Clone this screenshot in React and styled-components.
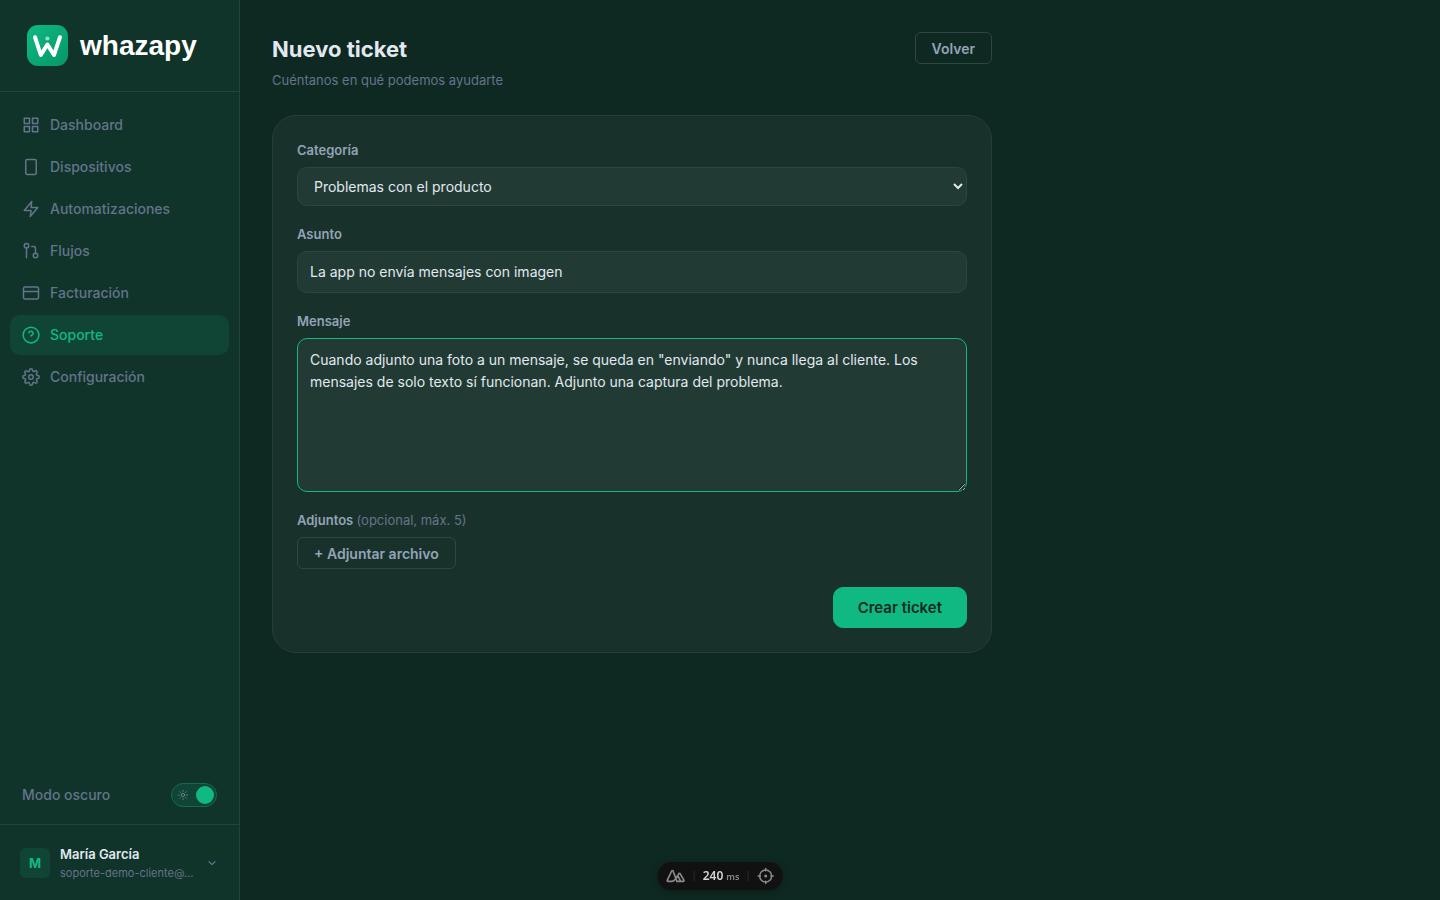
import React, { useState } from 'react';
import styled, { createGlobalStyle } from 'styled-components';

const GlobalStyle = createGlobalStyle`
  * {
    box-sizing: border-box;
  }
  body {
    margin: 0;
    background: #0e2922;
    color: #e2e8f0;
    font-family: Inter, sans-serif;
    font-size: 14px;
    line-height: 22px;
  }
  button, input, select, textarea {
    font-family: inherit;
  }
`;

const Layout = styled.div`
  display: grid;
  grid-template-columns: 240px 1fr;
  min-height: 100vh;
`;

const Sidebar = styled.aside`
  display: flex;
  flex-direction: column;
  height: 100vh;
  position: sticky;
  top: 0;
  background: #10332a;
  border-right: 1px solid #20453a;
`;

const Brand = styled.a`
  display: flex;
  align-items: center;
  gap: 12px;
  height: 92px;
  padding: 0 27px;
  border-bottom: 1px solid #20453a;
  color: #ffffff;
  font-family: "Liberation Sans", Arial, sans-serif;
  font-size: 28px;
  font-weight: 700;
  text-decoration: none;
`;

const Nav = styled.nav`
  display: flex;
  flex-direction: column;
  flex: 1;
  gap: 2px;
  padding: 13px 10px;
`;

const NavLink = styled.a`
  display: flex;
  align-items: center;
  gap: 10px;
  padding: 9px 12px;
  border-radius: 10px;
  color: ${({ $active }) => ($active ? '#10b981' : '#64748b')};
  background: ${({ $active }) => ($active ? '#104536' : 'transparent')};
  font-weight: 500;
  text-decoration: none;
`;

const ThemeRow = styled.label`
  display: flex;
  align-items: center;
  justify-content: space-between;
  padding: 0 22px 17px;
  color: #64748b;
  font-weight: 500;
`;

const Switch = styled.span`
  position: relative;
  display: flex;
  align-items: center;
  width: 46px;
  height: 24px;
  padding-left: 6px;
  border: 1px solid #126b50;
  border-radius: 12px;
  background: #104536;
  color: #7c8ea0;
`;

const SwitchInput = styled.input`
  appearance: none;
  position: absolute;
  inset: 0;
  margin: 0;
  cursor: pointer;
  &::before {
    content: '';
    position: absolute;
    top: 2px;
    left: 2px;
    width: 18px;
    height: 18px;
    border-radius: 50%;
    background: #10b981;
  }
  &:checked::before {
    left: 24px;
  }
`;

const UserButton = styled.button`
  display: flex;
  align-items: center;
  gap: 10px;
  height: 76px;
  padding: 0 22px 0 20px;
  border: 0;
  border-top: 1px solid #20453a;
  background: transparent;
  color: #64748b;
  text-align: left;
  cursor: pointer;
`;

const Avatar = styled.span`
  display: grid;
  place-items: center;
  flex: none;
  width: 30px;
  height: 30px;
  border-radius: 6px;
  background: #104536;
  color: #10b981;
  font-size: 13px;
  font-weight: 700;
`;

const UserInfo = styled.span`
  flex: 1;
`;

const UserName = styled.span`
  display: block;
  color: #e2e8f0;
  font-size: 13px;
  font-weight: 600;
  line-height: 20px;
`;

const UserEmail = styled.span`
  display: block;
  font-size: 11px;
  line-height: 18px;
  white-space: nowrap;
`;

const Main = styled.main`
  padding: 32px;
`;

const Page = styled.div`
  max-width: 720px;
`;

const PageHeader = styled.header`
  display: flex;
  align-items: flex-start;
  justify-content: space-between;
  margin-bottom: 24px;
`;

const Title = styled.h1`
  margin: 0 0 3px;
  font-size: 22px;
  font-weight: 700;
  line-height: 35px;
`;

const Subtitle = styled.p`
  margin: 0;
  color: #64748b;
  font-size: 13px;
  line-height: 21px;
`;

const Card = styled.form`
  display: flex;
  flex-direction: column;
  gap: 18px;
  padding: 24px;
  border: 1px solid #253f37;
  border-radius: 24px;
  background: #18322b;
`;

const Field = styled.div`
  display: flex;
  flex-direction: column;
  align-items: flex-start;
  gap: 6px;
`;

const Label = styled.label`
  color: #94a3b8;
  font-size: 13px;
  font-weight: 600;
  line-height: 21px;
`;

const Hint = styled.span`
  color: #64748b;
  font-weight: 400;
`;

const Control = styled.input`
  display: block;
  width: 100%;
  padding: 9px 12px;
  border: 1px solid #2d463f;
  border-radius: 10px;
  outline: none;
  background: #213b34;
  color: #e2e8f0;
  font-size: 14px;
  font-weight: 400;
  line-height: 22px;
  &:focus {
    border-color: #10b981;
  }
`;

const Select = styled(Control).attrs({ as: 'select' })`
  height: 39px;
`;

const TextArea = styled(Control).attrs({ as: 'textarea' })`
  padding: 10px 12px;
  border-color: #10b981;
  resize: vertical;
`;

const OutlineButton = styled.button`
  height: 32px;
  padding: 0 16px;
  border: 1px solid #30473f;
  border-radius: 6px;
  background: transparent;
  color: #94a3b8;
  font-size: 14px;
  font-weight: 600;
  cursor: pointer;
`;

const SubmitButton = styled.button`
  align-self: flex-end;
  height: 41px;
  padding: 0 24px;
  border: 1px solid #10b981;
  border-radius: 10px;
  background: #10b981;
  color: #0e2922;
  font-size: 15px;
  font-weight: 600;
  cursor: pointer;
`;

const DevPill = styled.div`
  position: fixed;
  bottom: 10px;
  left: 50%;
  transform: translateX(-50%);
  display: flex;
  align-items: center;
  gap: 8px;
  height: 28px;
  padding: 0 8px;
  border-radius: 14px;
  background: #111111;
  box-shadow: 0 2px 8px rgba(0, 0, 0, 0.3);
  color: #8a8a8a;
`;

const PillButton = styled.button`
  display: flex;
  padding: 0;
  border: 0;
  background: transparent;
  color: inherit;
  cursor: pointer;
`;

const PillDivider = styled.span`
  width: 1px;
  height: 10px;
  background: #2a2a2a;
`;

const PillTime = styled.span`
  display: flex;
  align-items: baseline;
  gap: 3px;
  color: #d4d4d4;
  font-family: "Noto Sans", sans-serif;
  font-size: 12px;
  font-weight: 600;
  line-height: 16px;
`;

const PillUnit = styled.span`
  color: #8a8a8a;
  font-size: 9px;
`;

const Icon = ({ size = 18, width = 2, children }) => (
  <svg
    width={size}
    height={size}
    viewBox="0 0 24 24"
    fill="none"
    stroke="currentColor"
    strokeWidth={width}
    strokeLinecap="round"
    strokeLinejoin="round"
    aria-hidden="true"
  >
    {children}
  </svg>
);

const LogoMark = () => (
  <svg width="41" height="41" viewBox="0 0 41 41" fill="none" aria-hidden="true">
    <defs>
      <linearGradient id="logo-fill" x1="0" y1="0" x2="1" y2="1">
        <stop offset="0" stopColor="#10b981" />
        <stop offset="1" stopColor="#059669" />
      </linearGradient>
    </defs>
    <rect width="41" height="41" rx="11" fill="url(#logo-fill)" />
    <path
      d="M8 12.200L13.800 30L20.400 19.500L27 30L33 12.200"
      stroke="#ffffff"
      strokeWidth="4"
      strokeLinecap="round"
      strokeLinejoin="round"
    />
    <circle cx="20.400" cy="13.500" r="2.100" fill="#8fdfc0" />
  </svg>
);

const links = [
  {
    label: 'Dashboard',
    icon: (
      <>
        <rect x="3" y="3" width="7" height="7" />
        <rect x="14" y="3" width="7" height="7" />
        <rect x="3" y="14" width="7" height="7" />
        <rect x="14" y="14" width="7" height="7" />
      </>
    ),
  },
  {
    label: 'Dispositivos',
    icon: <rect x="5" y="2" width="14" height="20" rx="2" />,
  },
  {
    label: 'Automatizaciones',
    icon: <path d="M13 2L3 14h9l-1 8 10-12h-9l1-8z" />,
  },
  {
    label: 'Flujos',
    icon: (
      <>
        <circle cx="6" cy="5" r="3" />
        <circle cx="18" cy="18" r="3" />
        <path d="M6 8v13" />
        <path d="M13 6h3a2 2 0 0 1 2 2v7" />
      </>
    ),
  },
  {
    label: 'Facturación',
    icon: (
      <>
        <rect x="2" y="4" width="20" height="16" rx="2" />
        <path d="M2 10h20" />
      </>
    ),
  },
  {
    label: 'Soporte',
    active: true,
    icon: (
      <>
        <circle cx="12" cy="12" r="10.500" />
        <path d="M9.100 9a3 3 0 0 1 5.800 1c0 2-3 2.400-3 3.200" />
      </>
    ),
  },
  {
    label: 'Configuración',
    icon: (
      <>
        <circle cx="12" cy="12" r="3" />
        <path d="M19.400 15a1.650 1.650 0 0 0 .33 1.820l.06.06a2 2 0 0 1-2.830 2.830l-.06-.06a1.650 1.650 0 0 0-1.820-.33 1.650 1.650 0 0 0-1 1.510V21a2 2 0 0 1-4 0v-.09A1.650 1.650 0 0 0 9 19.400a1.650 1.650 0 0 0-1.820.33l-.06.06a2 2 0 0 1-2.830-2.830l.06-.06a1.650 1.650 0 0 0 .33-1.820 1.650 1.650 0 0 0-1.510-1H3a2 2 0 0 1 0-4h.09A1.650 1.650 0 0 0 4.600 9a1.650 1.650 0 0 0-.33-1.820l-.06-.06a2 2 0 0 1 2.830-2.830l.06.06a1.650 1.650 0 0 0 1.820.33H9a1.650 1.650 0 0 0 1-1.510V3a2 2 0 0 1 4 0v.09a1.650 1.650 0 0 0 1 1.510 1.650 1.650 0 0 0 1.820-.33l.06-.06a2 2 0 0 1 2.830 2.830l-.06.06a1.650 1.650 0 0 0-.33 1.820V9a1.650 1.650 0 0 0 1.510 1H21a2 2 0 0 1 0 4h-.09a1.650 1.650 0 0 0-1.510 1z" />
      </>
    ),
  },
];

function App() {
  const [dark, setDark] = useState(true);
  const [data, setData] = useState({
    category: 'producto',
    subject: 'La app no envía mensajes con imagen',
    message:
      'Cuando adjunto una foto a un mensaje, se queda en "enviando" y nunca llega al cliente. Los mensajes de solo texto sí funcionan. Adjunto una captura del problema.',
  });

  const handleChange = (e) => {
    setData({ ...data, [e.target.name]: e.target.value });
  };

  return (
    <>
      <GlobalStyle />
      <Layout>
        <Sidebar>
          <Brand href="#">
            <LogoMark />
            whazapy
          </Brand>
          <Nav>
            {links.map((link) => (
              <NavLink key={link.label} href="#" $active={link.active}>
                <Icon>{link.icon}</Icon>
                {link.label}
              </NavLink>
            ))}
          </Nav>
          <ThemeRow>
            Modo oscuro
            <Switch>
              <Icon size={10} width={2}>
                <circle cx="12" cy="12" r="4" />
                <path d="M12 1v2M12 21v2M4.200 4.200l1.400 1.400M18.400 18.400l1.400 1.400M1 12h2M21 12h2M4.200 19.800l1.400-1.400M18.400 5.600l1.400-1.400" />
              </Icon>
              <SwitchInput
                type="checkbox"
                checked={dark}
                onChange={(e) => setDark(e.target.checked)}
              />
            </Switch>
          </ThemeRow>
          <UserButton type="button">
            <Avatar>M</Avatar>
            <UserInfo>
              <UserName>María García</UserName>
              <UserEmail>soporte-demo-cliente@…</UserEmail>
            </UserInfo>
            <Icon size={10} width={3}>
              <path d="M5 9l7 7 7-7" />
            </Icon>
          </UserButton>
        </Sidebar>
        <Main>
          <Page>
            <PageHeader>
              <div>
                <Title>Nuevo ticket</Title>
                <Subtitle>Cuéntanos en qué podemos ayudarte</Subtitle>
              </div>
              <OutlineButton type="button">Volver</OutlineButton>
            </PageHeader>
            <Card onSubmit={(e) => e.preventDefault()}>
              <Field>
                <Label htmlFor="category">Categoría</Label>
                <Select id="category" name="category" value={data.category} onChange={handleChange}>
                  <option value="producto">Problemas con el producto</option>
                </Select>
              </Field>
              <Field>
                <Label htmlFor="subject">Asunto</Label>
                <Control id="subject" name="subject" value={data.subject} onChange={handleChange} />
              </Field>
              <Field>
                <Label htmlFor="message">Mensaje</Label>
                <TextArea id="message" name="message" rows={6} value={data.message} onChange={handleChange} />
              </Field>
              <Field>
                <Label htmlFor="attach">
                  Adjuntos <Hint>(opcional, máx. 5)</Hint>
                </Label>
                <OutlineButton id="attach" type="button">+ Adjuntar archivo</OutlineButton>
              </Field>
              <SubmitButton type="submit">Crear ticket</SubmitButton>
            </Card>
          </Page>
        </Main>
      </Layout>
      <DevPill>
        <PillButton type="button" aria-label="DevTools">
          <Icon size={20} width={2}>
            <path d="M13.500 18.500H21a1 1 0 0 0 .9-1.500L17.500 9.500a1 1 0 0 0-1.800 0l-1.200 2M13.500 18.500L8.900 6a1 1 0 0 0-1.700 0L2 17a1 1 0 0 0 .9 1.500h4.600c2 0 3-1 4-2.500l3-4.500 3.500 7" />
          </Icon>
        </PillButton>
        <PillDivider />
        <PillTime>
          240 <PillUnit>ms</PillUnit>
        </PillTime>
        <PillDivider />
        <PillButton type="button" aria-label="Inspector">
          <Icon size={18} width={2}>
            <circle cx="12" cy="12" r="8" />
            <circle cx="12" cy="12" r="1" />
            <path d="M12 2v3M12 19v3M2 12h3M19 12h3" />
          </Icon>
        </PillButton>
      </DevPill>
    </>
  );
}

export default App;
